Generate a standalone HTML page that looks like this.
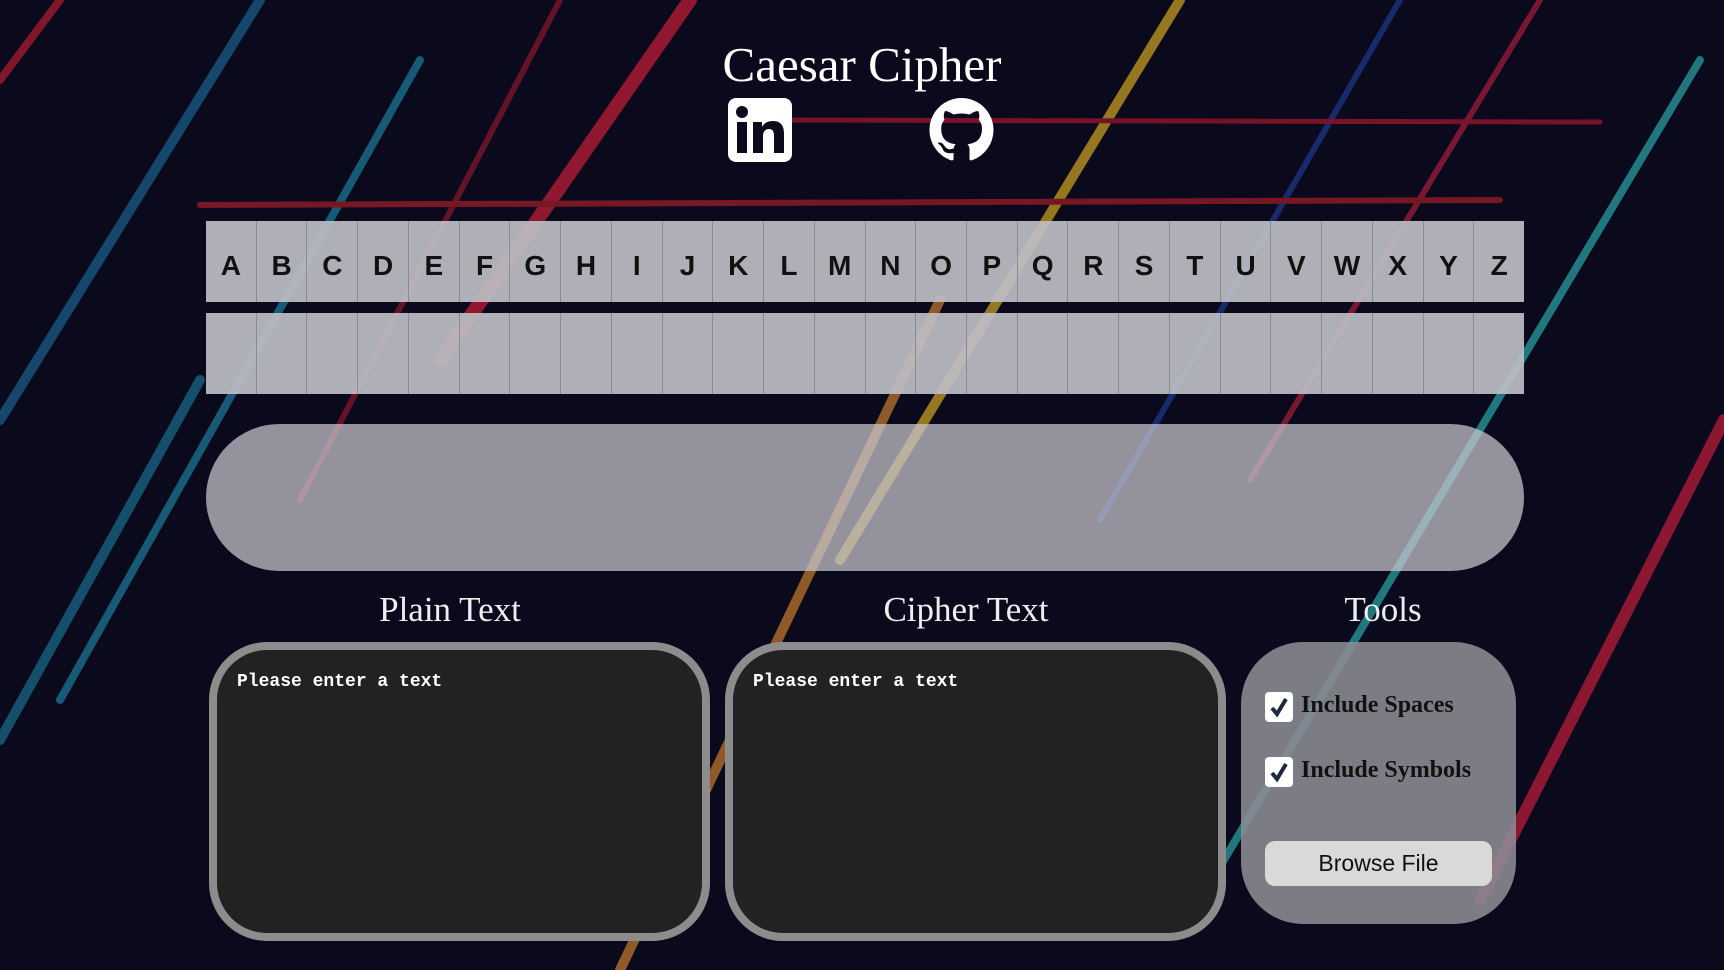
<!DOCTYPE html>
<html><head><meta charset="utf-8"><style>
*{margin:0;padding:0;box-sizing:border-box}
body{width:1724px;height:970px;overflow:hidden;background:#0b0a1c;position:relative;font-family:"Liberation Sans",sans-serif}
#bg{position:absolute;left:0;top:0}
.abs{position:absolute}
h1{position:absolute;left:0;width:1724px;top:36px;text-align:center;font:49px "Liberation Serif",serif;color:#fff;font-weight:normal}
.grid{position:absolute;left:206px;width:1318px;display:flex}
.grid div{flex:1;height:81px;background:rgba(190,190,196,0.92);border-right:1px solid #8a8a90;font:bold 28px "Liberation Sans",sans-serif;color:#111;display:flex;align-items:center;justify-content:center;padding-top:8px}
.grid div:last-child{border-right:none}
.pill{left:206px;top:424px;width:1318px;height:147px;border-radius:74px;background:rgba(200,200,208,0.72)}
.lbl{font:35px "Liberation Serif",serif;color:#eee;text-align:center;width:300px;top:590px}
.ta{top:642px;width:501px;height:299px;border:8px solid #8c8c8c;border-radius:58px;background:#222;color:#fff;font:bold 18px "Liberation Mono",monospace;padding:22px 0 0 20px}
.tools{left:1241px;top:642px;width:275px;height:282px;border-radius:62px;background:rgba(140,140,148,0.88)}
.cb{width:28px;height:30px;background:#fff;border-radius:4px;display:flex;align-items:center;justify-content:center}
.ct{font:bold 24px "Liberation Serif",serif;color:#111}
.btn{left:1265px;top:841px;width:227px;height:45px;background:#d9d9d9;border-radius:10px;font:23px "Liberation Sans",sans-serif;color:#111;display:flex;align-items:center;justify-content:center}
</style></head><body>
<svg id="bg" width="1724" height="970" viewBox="0 0 1724 970">
<g stroke-linecap="round" fill="none" opacity="0.6">
<line x1="690" y1="0" x2="440" y2="360" stroke="#e8203c" stroke-width="14"/>
<line x1="1180" y1="0" x2="840" y2="560" stroke="#f0c020" stroke-width="10"/>
<line x1="940" y1="300" x2="620" y2="970" stroke="#e89030" stroke-width="10"/>
<line x1="260" y1="0" x2="0" y2="420" stroke="#1a70a0" stroke-width="10"/>
<line x1="420" y1="60" x2="60" y2="700" stroke="#2090b0" stroke-width="8"/>
<line x1="200" y1="380" x2="0" y2="740" stroke="#1a80a0" stroke-width="10"/>
<line x1="1700" y1="60" x2="1200" y2="900" stroke="#30c0c0" stroke-width="8"/>
<line x1="1724" y1="420" x2="1480" y2="900" stroke="#e02040" stroke-width="12"/>
<line x1="1540" y1="0" x2="1250" y2="480" stroke="#c02040" stroke-width="6"/>
<line x1="560" y1="0" x2="300" y2="500" stroke="#a01830" stroke-width="6"/>
<line x1="1400" y1="0" x2="1100" y2="520" stroke="#2040a0" stroke-width="6"/>
<line x1="60" y1="0" x2="0" y2="80" stroke="#d02030" stroke-width="8"/>
<line x1="200" y1="205" x2="1500" y2="200" stroke="#c02028" stroke-width="6"/>
<line x1="760" y1="120" x2="1600" y2="122" stroke="#c01830" stroke-width="5"/>
</g></svg>
<h1>Caesar Cipher</h1>
<svg class="abs" style="left:728px;top:98px" width="64" height="64" viewBox="0 0 64 64"><rect width="64" height="64" rx="8" fill="#fff"/><rect x="9" y="24" width="10" height="31" fill="#0b0a1c"/><circle cx="14" cy="14" r="6" fill="#0b0a1c"/><path d="M25 24h9v5c2-4 6-6 11-6 8 0 11 5 11 13v19H46V38c0-4-1-7-5-7s-6 3-6 7v17H25z" fill="#0b0a1c"/></svg>
<svg class="abs" style="left:929px;top:98px" width="65" height="64" viewBox="0 0 16 16"><path fill="#fff" d="M8 0C3.58 0 0 3.58 0 8c0 3.54 2.29 6.53 5.47 7.59.4.07.55-.17.55-.38 0-.19-.01-.82-.01-1.49-2.01.37-2.53-.49-2.69-.94-.09-.23-.48-.94-.82-1.13-.28-.15-.68-.52-.01-.53.63-.01 1.08.58 1.23.82.72 1.21 1.87.87 2.33.66.07-.52.28-.87.51-1.07-1.78-.2-3.64-.89-3.64-3.95 0-.87.31-1.59.82-2.15-.08-.2-.36-1.02.08-2.12 0 0 .67-.21 2.2.82.64-.18 1.32-.27 2-.27.68 0 1.36.09 2 .27 1.53-1.04 2.2-.82 2.2-.82.44 1.1.16 1.92.08 2.12.51.56.82 1.27.82 2.15 0 3.07-1.87 3.75-3.65 3.95.29.25.54.73.54 1.48 0 1.07-.01 1.93-.01 2.2 0 .21.15.46.55.38A8.013 8.013 0 0016 8c0-4.42-3.58-8-8-8z"/></svg>
<div class="grid" style="top:221px"><div>A</div><div>B</div><div>C</div><div>D</div><div>E</div><div>F</div><div>G</div><div>H</div><div>I</div><div>J</div><div>K</div><div>L</div><div>M</div><div>N</div><div>O</div><div>P</div><div>Q</div><div>R</div><div>S</div><div>T</div><div>U</div><div>V</div><div>W</div><div>X</div><div>Y</div><div>Z</div></div>
<div class="grid" style="top:313px"><div></div><div></div><div></div><div></div><div></div><div></div><div></div><div></div><div></div><div></div><div></div><div></div><div></div><div></div><div></div><div></div><div></div><div></div><div></div><div></div><div></div><div></div><div></div><div></div><div></div><div></div></div>
<div class="abs pill"></div>
<div class="abs lbl" style="left:300px">Plain Text</div>
<div class="abs lbl" style="left:816px">Cipher Text</div>
<div class="abs lbl" style="left:1233px">Tools</div>
<div class="abs ta" style="left:209px">Please enter a text</div>
<div class="abs ta" style="left:725px">Please enter a text</div>
<div class="abs tools"></div>
<div class="abs cb" style="left:1265px;top:692px"><svg width="20" height="22" viewBox="0 0 20 22"><path d="M3 12l5 6L17 3" stroke="#1e2a3a" stroke-width="4" fill="none"/></svg></div>
<div class="abs ct" style="left:1301px;top:692px">Include Spaces</div>
<div class="abs cb" style="left:1265px;top:757px"><svg width="20" height="22" viewBox="0 0 20 22"><path d="M3 12l5 6L17 3" stroke="#1e2a3a" stroke-width="4" fill="none"/></svg></div>
<div class="abs ct" style="left:1301px;top:757px">Include Symbols</div>
<div class="abs btn">Browse File</div>
</body></html>
